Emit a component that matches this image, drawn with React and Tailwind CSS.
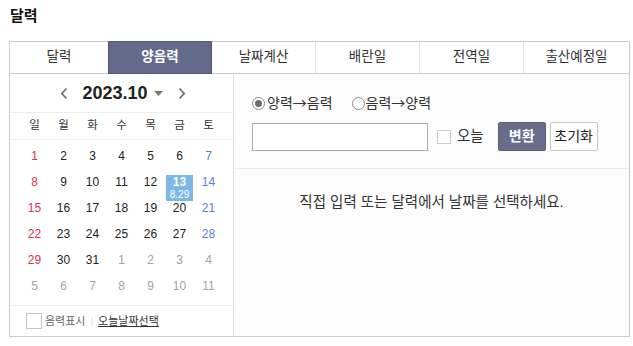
import React from "react";

const weeks = [
  [1, 2, 3, 4, 5, 6, 7],
  [8, 9, 10, 11, 12, 13, 14],
  [15, 16, 17, 18, 19, 20, 21],
  [22, 23, 24, 25, 26, 27, 28],
  [29, 30, 31, "1n", "2n", "3n", "4n"],
  ["5n", "6n", "7n", "8n", "9n", "10n", "11n"],
];

const tabs = [
  { label: "달력", w: "w-[98px]" },
  { label: "양음력", w: "w-[104px]", active: true },
  { label: "날짜계산", w: "w-[104px]" },
  { label: "배란일", w: "w-[104px]" },
  { label: "전역일", w: "w-[104px]" },
  { label: "출산예정일", w: "w-[105px]" },
];

function Chevron({ dir }) {
  return (
    <svg width="8" height="13" viewBox="0 0 8 13">
      <path
        d={dir === "l" ? "M6.5 1.5 L1.8 6.5 L6.5 11.5" : "M1.5 1.5 L6.2 6.5 L1.5 11.5"}
        stroke="#6b6b6b"
        strokeWidth="1.7"
        fill="none"
      />
    </svg>
  );
}

function Radio({ checked }) {
  return (
    <span className="w-[13px] h-[13px] rounded-full border border-[#8a8a8a] bg-white flex items-center justify-center shrink-0">
      {checked && <span className="w-[7px] h-[7px] rounded-full bg-[#6a6a6a]" />}
    </span>
  );
}

function Arrow() {
  return <span className="font-['Noto_Sans_CJK_KR',sans-serif]">→</span>;
}

function DayCell({ d, col }) {
  const str = String(d);
  const next = str.endsWith("n");
  const num = next ? str.slice(0, -1) : str;
  if (d === 13) {
    return (
      <div className="h-[26px] flex justify-center">
        <div className="w-[27px] h-[26px] mt-[6px] bg-[#7cb8e6] flex flex-col items-center text-white">
          <span className="text-[12px] font-bold leading-[13px] mt-[1px]">13</span>
          <span className="text-[10px] leading-[11px]">8.29</span>
        </div>
      </div>
    );
  }
  let color = "text-[#222]";
  if (next) color = "text-[#a3a3a3]";
  else if (col === 0) color = "text-[#e3304f]";
  else if (col === 6) color = "text-[#5a80d6]";
  return (
    <div className={`h-[26px] flex justify-center pt-[6px] text-[12px] leading-[14px] ${color}`}>
      {num}
    </div>
  );
}

export default function App() {
  return (
    <div className="w-[633px] h-[346px] bg-white pl-[9px] pt-[5px] font-['Liberation_Sans','Noto_Sans_CJK_KR',sans-serif] text-[#222]">
      <h2 className="text-[15px] font-bold leading-[22px] h-[36px] pl-[1px] text-[#111]">달력</h2>
      <div className="w-[621px] border border-[#cccccc]">
        {/* tabs */}
        <div className="flex h-[32px] border-b border-[#cccccc]">
          {tabs.map((t, i) => (
            <div
              key={t.label}
              className={`${t.w} flex items-center justify-center text-[13.5px] ${
                t.active
                  ? "bg-[#646a89] text-white font-bold -mt-[1px] -mb-[1px] h-[33px] border border-[#555b7a]"
                  : "text-[#333] " + (i < tabs.length - 1 && !tabs[i + 1].active ? "border-r border-[#e0e0e0]" : "")
              }`}
            >
              {t.label}
            </div>
          ))}
        </div>
        {/* body */}
        <div className="flex h-[262px]">
          {/* left calendar */}
          <div className="w-[224px] border-r border-[#dddddd] bg-white flex flex-col">
            <div className="h-[39px] border-b border-[#eeeeee] flex items-center justify-center pl-[3px]">
              <Chevron dir="l" />
              <span className="ml-[14px] text-[18px] font-bold text-[#222] leading-[20px]">2023.10</span>
              <svg className="ml-[6px]" width="9" height="5" viewBox="0 0 9 5">
                <path d="M0 0 L9 0 L4.5 5 Z" fill="#777" />
              </svg>
              <span className="ml-[15px]">
                <Chevron dir="r" />
              </span>
            </div>
            <div className="h-[27px] border-b border-[#eeeeee] grid grid-cols-[repeat(7,29px)] pl-[10px] items-center text-[11.5px] text-[#333]">
              {["일", "월", "화", "수", "목", "금", "토"].map((w) => (
                <span key={w} className="text-center">{w}</span>
              ))}
            </div>
            <div className="flex-1 grid grid-cols-[repeat(7,29px)] auto-rows-[26px] content-start pl-[10px] pt-[3px]">
              {weeks.map((row) =>
                row.map((d, ci) => <DayCell key={String(d) + "-" + ci} d={d} col={ci} />)
              )}
            </div>
            <div className="h-[31px] border-t border-[#eeeeee] flex items-center pl-[16px] text-[11px]">
              <span className="w-[16px] h-[16px] border border-[#c4c4c4] bg-white mr-[3px]" />
              <span className="text-[#666]">음력표시</span>
              <span className="text-[#dddddd] mx-[5px] text-[10px]">|</span>
              <span className="text-[#333] underline">오늘날짜선택</span>
            </div>
          </div>
          {/* right panel */}
          <div className="flex-1 bg-[#fcfcfd] flex flex-col">
            <div className="h-[95px] border-b border-[#eeeeee] pl-[18px] pt-[20px]">
              <div className="flex items-center h-[18px] text-[14px] text-[#333]">
                <Radio checked />
                <span className="ml-[2px]">
                  양력<Arrow />음력
                </span>
                <span className="ml-[19px]">
                  <Radio />
                </span>
                <span className="ml-[1px]">
                  음력<Arrow />양력
                </span>
              </div>
              <div className="flex items-center mt-[10px]">
                <input className="w-[176px] h-[28px] border border-[#a9a9a9] bg-white outline-none" />
                <span className="ml-[9px] w-[14px] h-[14px] border border-[#c9c9c9] bg-white" />
                <span className="ml-[6px] text-[14.5px] text-[#333]">오늘</span>
                <button className="ml-[14px] w-[48px] h-[29px] bg-[#686d8c] border border-[#5a5f7d] rounded-[2px] text-white text-[14px] font-bold">
                  변환
                </button>
                <button className="ml-[4px] w-[48px] h-[29px] bg-white border border-[#c6c6c6] rounded-[2px] text-[#222] text-[14px]">
                  초기화
                </button>
              </div>
            </div>
            <div className="pt-[24px] text-center text-[14.5px] leading-[18px] text-[#333]">
              직접 입력 또는 달력에서 날짜를 선택하세요.
            </div>
          </div>
        </div>
      </div>
    </div>
  );
}
